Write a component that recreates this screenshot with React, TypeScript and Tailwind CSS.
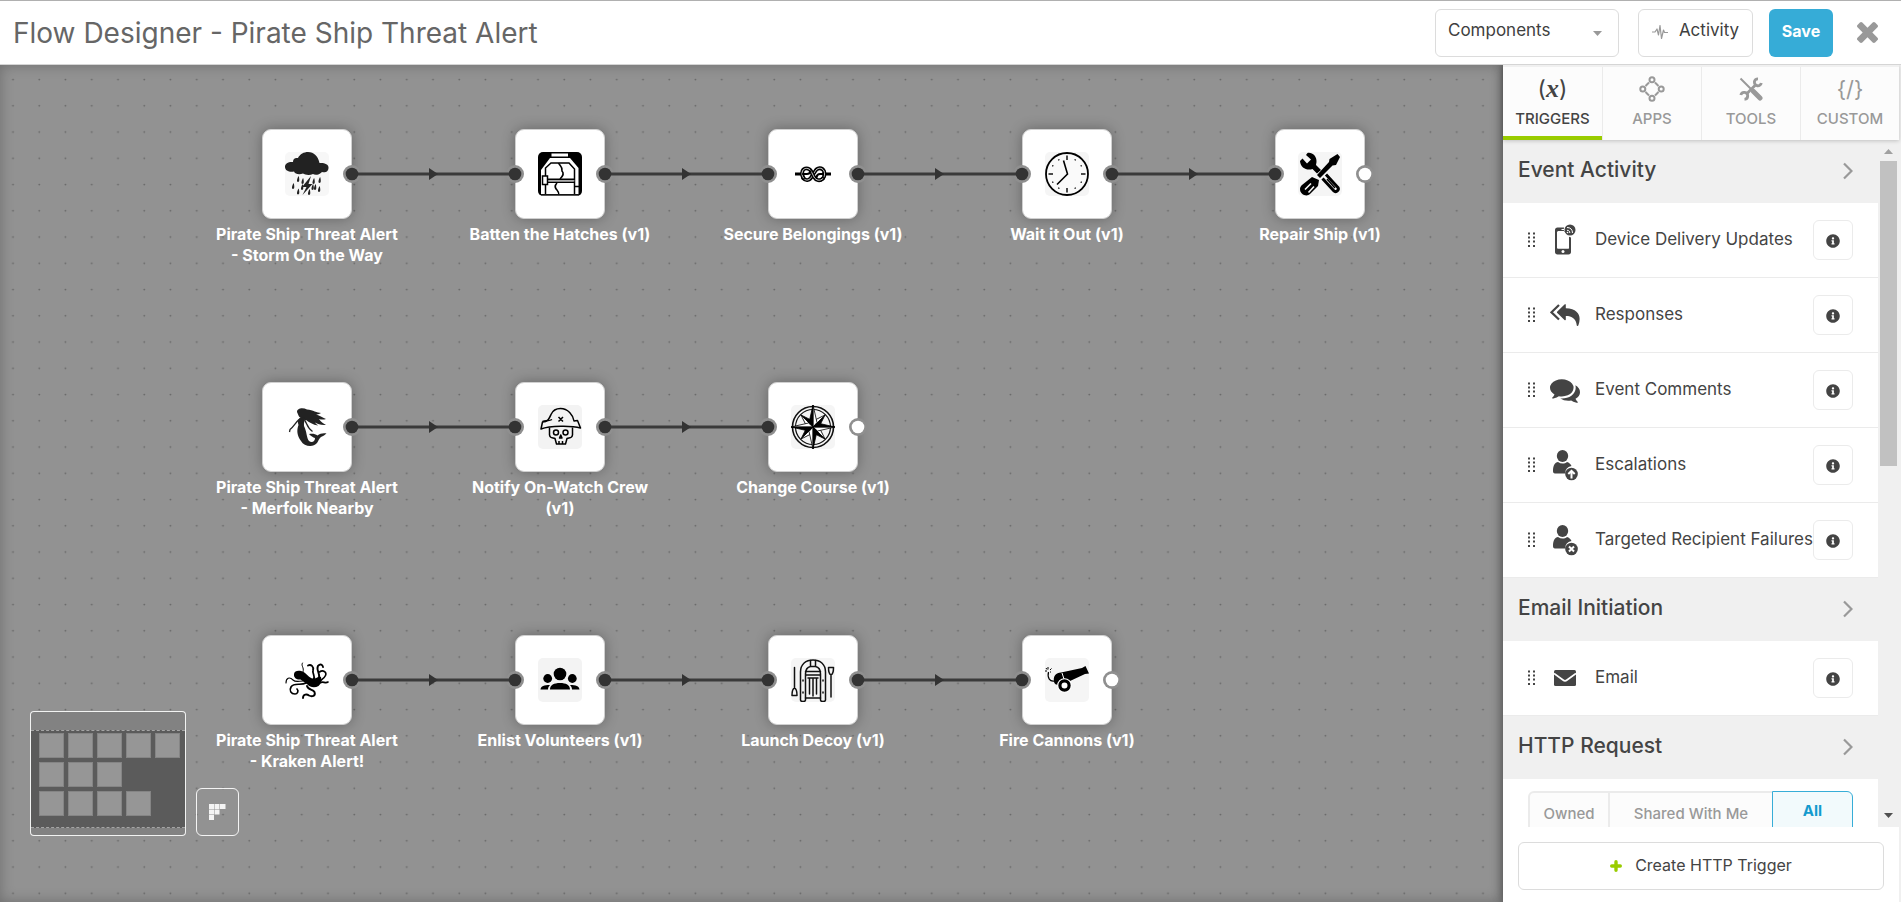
import React from 'react';
import { FaInfoCircle } from 'react-icons/fa';

type IconProps = { children: React.ReactNode; tile?: string };

function Glyph({ children, tile }: IconProps) {
  return (
    <svg viewBox="0 0 44 44" className="size-11" fill="none" aria-hidden="true">
      {tile && <rect width="44" height="44" rx="5" fill={tile} />}
      {children}
    </svg>
  );
}

const drops = [
  [13, 26], [17.5, 28], [8, 33], [13, 38.5], [17, 34], [28.5, 28], [34.5, 27], [27.5, 34], [34, 36], [24, 39], [30, 34],
];

function StormIcon() {
  return (
    <Glyph tile="#f7f7f7">
      <g fill="#222">
        <path d="M0 15C0 11 4 9.500 8 10C8 6.500 10 5.500 13 6C15 2 19 0 23 0C29 0 33 4 34.500 11C39 10.500 43.500 12 43.500 15.500C43.500 20 40 21 37 20C34 23 30 23.500 28 22C25 23.500 20 23 18 21.500C14 23 10 22 9 19.500C5 20.500 0 19 0 15Z" />
        <path d="M26 24L17 35H21.500L17.500 43L27.500 32H23.500Z" />
        {drops.map(([x, y]) => (
          <path key={`${x}-${y}`} d={`M${x + 0.6} ${y - 2}C${x + 1.6} ${y + 1} ${x + 1.6} ${y + 4} ${x} ${y + 4}C${x - 1.6} ${y + 4} ${x - 1.2} ${y + 1} ${x + 0.6} ${y - 2}Z`} />
        ))}
      </g>
    </Glyph>
  );
}

function HatchIcon() {
  return (
    <Glyph>
      <rect width="44" height="44" rx="5" fill="#000" />
      <rect x="13.500" y="1.500" width="16.500" height="3" fill="#fff" />
      <path d="M3 42V18L12 6H32L40.500 16V42Z" fill="#fff" />
      <path d="M7.500 44V16L13 11H31L36.500 17V44M7.500 27.300H36.500M7.500 30.300H36.500M36.500 34.500H42" stroke="#000" strokeWidth="1.500" />
      <path d="M8 28.800H36.500" stroke="#999" strokeWidth="1.200" />
      <path d="M20.500 11C22 14 25 15 24 19C27 22 24 25 22 27M19 31C16 34 17 36 19 38C21 40 21 41 21 44" stroke="#000" strokeWidth="1.600" />
      <rect x="4.500" y="24" width="5" height="8.500" fill="#fff" stroke="#000" strokeWidth="1.500" />
      <path d="M3 43.500H41" stroke="#555" strokeWidth="1.500" />
    </Glyph>
  );
}

function KnotIcon() {
  return (
    <Glyph>
      <path d="M4 22H13M31 22H40" stroke="#000" strokeWidth="2.800" />
      <g strokeLinecap="round">
        <path d="M12 26C15 29.500 19 28.500 21 24L24 19.500C26 15.500 31 15 33 19C34.500 23 33 27 29.500 28" stroke="#000" strokeWidth="3.800" />
        <path d="M12 26C15 29.500 19 28.500 21 24L24 19.500C26 15.500 31 15 33 19C34.500 23 33 27 29.500 28" stroke="#fff" strokeWidth="0.800" />
        <path d="M32 26.500C29 29.500 25 28.500 23 25L20 19C18 15.500 13 15.500 11.500 19C10.500 22 11 24 12.500 26" stroke="#000" strokeWidth="3.800" />
        <path d="M32 26.500C29 29.500 25 28.500 23 25L20 19C18 15.500 13 15.500 11.500 19C10.500 22 11 24 12.500 26" stroke="#fff" strokeWidth="0.800" />
        <path d="M12 22H16C18 22 19 21 19.500 19.500M32 22H29C27 22 26 23 25.500 25" stroke="#000" strokeWidth="2.200" />
      </g>
    </Glyph>
  );
}

const ticks = [0, 30, 60, 90, 120, 150, 180, 210, 240, 270, 300, 330];

function ClockIcon() {
  return (
    <Glyph tile="#f5f5f5">
      <circle cx="22" cy="22" r="21" fill="#fafafa" stroke="#000" strokeWidth="1.800" />
      {ticks.map((a) => (
        <path key={a} d={a % 90 === 0 ? 'M22 3.500V8' : 'M22 5V6.200'} stroke="#000" strokeWidth="1.400" transform={`rotate(${a} 22 22)`} />
      ))}
      <path d="M18.500 8.500L22.500 22L12 32.500" stroke="#000" strokeWidth="1.600" />
    </Glyph>
  );
}

function RepairIcon() {
  return (
    <Glyph tile="#f5f5f5">
      <path d="M9.500 1C14 0 19 4 18.500 10L18 13L23 18L19 21.500L14.500 17C9 19 2.500 16 2 9L4.500 6.500L9 11.500L13 7.500L8 3Z" fill="#000" />
      <path d="M39.500 2L42 5L38 13L34.500 13.500L22 26L19 23L31 10L31.500 7Z" fill="#000" />
      <path d="M14 25L21 28L20 34L12 42C9 45 2 43 2 37C2 35 3 34 4 33Z" fill="#000" />
      <path d="M7 37.500L13 31.500M10.500 40.500L16 34.500" stroke="#f5f5f5" strokeWidth="1.600" />
      <path d="M24.500 26.500L36 39C37.500 40.500 41.500 38.500 40 35.500L28 22.500" stroke="#000" strokeWidth="3" />
      <path d="M29 27L37 36" stroke="#000" strokeWidth="1.500" />
    </Glyph>
  );
}

function MermaidIcon() {
  return (
    <Glyph>
      <g fill="#222">
        <path d="M12 7C12 3 18 2.500 22 4.500C28 5 32 8 36 8C34 9.500 32 9.500 31 9.500C35 10.500 38 13 41 14C38 15 36 14.500 34 14C36 17 38 18.500 41 20C36 20.500 33 19 30 17.500C31 19 32 19.500 33 20.500C28 20 24 17 21 15C19 15.500 14 12.500 13.500 10.500Z" />
        <path d="M14.500 13C12.500 15 12.500 17 13.500 20C11.500 25 12 31 16 36C19 41.500 28 43 32 38C34 35 34 33 37 31.500C39.500 30.500 40 29.500 41.500 28.500C38 28 35 28.500 32.500 30.500C30 28.500 27 28.500 24 29C26 31 28 32.500 30 33C30 37 26.500 38 24 36C21.500 33 22 27 19 21C18.500 18 20 15 19.500 12.500Z" />
      </g>
      <path d="M14 14.500C10 18 9.500 21 5 24.500L4.500 27M19.500 15C22 18 22 23 27.500 26.500" stroke="#222" strokeWidth="1.300" />
    </Glyph>
  );
}

function SkullIcon() {
  return (
    <Glyph tile="#f3f3f3">
      <g stroke="#000" strokeWidth="1.500" strokeLinejoin="round">
        <path d="M3 24L4.500 17C10 17 11.500 13 13 9.500C15 5 18 3.500 22.500 3.500C30 3.500 35 10 36 16L39.500 15.500L42.500 23C34 20.500 12 20.500 3 24Z" />
        <path d="M4.500 16.500C8 15.500 12 16 14 14.500M20.500 12L25 16.500M25 12L20.500 16.500" />
        <path d="M11.500 22.500V30C12 34 15 32.500 17 33.500L18.500 39H27.500L29 33.500C31 32.500 34 34 34.500 30V22.500" />
        <circle cx="18" cy="27.500" r="2.500" />
        <circle cx="27.500" cy="27.500" r="2.500" />
        <path d="M22.800 30L21.500 33H24ZM21 36V39M24.500 36V39" />
      </g>
    </Glyph>
  );
}

function CompassIcon() {
  return (
    <Glyph tile="#f5f5f5">
      <circle cx="22" cy="22" r="20.500" stroke="#111" strokeWidth="1.600" />
      <circle cx="22" cy="22" r="17.500" stroke="#111" strokeWidth="1.200" />
      {[45, 135, 225, 315].map((a) => (
        <g key={a} transform={`rotate(${a} 22 22)`} stroke="#000" strokeWidth="0.800">
          <path d="M22 22L22 5L26 17Z" fill="#000" />
          <path d="M22 22L22 5L18 17Z" fill="#fff" />
        </g>
      ))}
      {[0, 90, 180, 270].map((a) => (
        <g key={a} transform={`rotate(${a} 22 22)`} stroke="#000" strokeWidth="0.800">
          <path d="M22 22L22 0L26 17.500Z" fill="#fff" />
          <path d="M22 22L22 0L18 17.500Z" fill="#000" />
        </g>
      ))}
    </Glyph>
  );
}

function KrakenIcon() {
  return (
    <Glyph>
      <path d="M9 16C9.500 12 15 12 18.500 14C22 16 24 20 28 20.500C32 21 34 17 36 19C37 22 36 26 33.500 28C30 30 25 29.500 22.500 26.500C20 25 18 23 15.500 21.500C12 22 8.500 20 9 16Z" fill="#000" />
      <g stroke="#000" strokeLinecap="round">
        <path d="M17.500 5C15.500 8 19.500 9 18 14" strokeWidth="1" />
        <path d="M23 7.500C26 6 29 8.500 28 12.500C27 16 31 18 28.500 22" strokeWidth="1.800" />
        <path d="M38 9C37.500 5 32 6 32.500 11C33 15 36 18 33 23" strokeWidth="1.900" />
        <path d="M34.500 14C38 11.500 42 14 40.500 17.500C39 21 35 22 34 25M35 25C38 22.500 40 26 43 24" strokeWidth="1.600" />
        <path d="M1 25C1 20 4.500 18.500 8 22C10.500 24.500 14 23 18 23" strokeWidth="1.100" />
        <path d="M12 31C14 33 12.500 36 10 36C6 36 4 32.500 6 29C9 24 16 28 21 25" strokeWidth="1.700" />
        <path d="M18 40C18 36 22 36 24 37.500C27 39 31 38 29.500 34C28 31 23 32 22 28" strokeWidth="1.900" />
      </g>
    </Glyph>
  );
}

function CrowdIcon() {
  return (
    <Glyph tile="#f3f3f3">
      <g fill="#000">
        <circle cx="22" cy="16" r="6.300" />
        <circle cx="9.700" cy="20.500" r="4.400" />
        <circle cx="34.300" cy="20.500" r="4.400" />
        <path d="M12 31.500C12 27 16 25 22 25S32 27 32 31.500ZM2.500 31.500C3 28 6 27 12 27C10.500 28.500 10 30 10 31.500ZM41.500 31.500C41 28 38 27 32 27C33.500 28.500 34 30 34 31.500Z" />
      </g>
    </Glyph>
  );
}

function BoatIcon() {
  return (
    <Glyph tile="#f5f5f5">
      <g stroke="#111" strokeWidth="1.500" strokeLinejoin="round" strokeLinecap="round">
        <path d="M9.500 42V14C9.500 6 15 2 22 2S34.500 6 34.500 14V42C34.500 44 29.500 44 29.500 42V40H14.500V42C14.500 44 9.500 44 9.500 42Z" />
        <path d="M14.500 40V16C14.500 11 17 9 19.500 8.500H24.500C27 9 29.500 11 29.500 16V40M14.500 13.500H29.500M14.500 17H29.500M19.500 8.500V2.500M24.500 8.500V2.500" />
        <path d="M18.500 21V36M22 21V38M25.500 21V36M17 20H27M12 22V23M12 34V35M32 22V23M32 34V35" />
        <path d="M3.500 9.500V30M3.500 30C1 31 1 34 1 37.500H6C6 34 6 31 3.500 30ZM40 39V17M40 17C37.500 16 37.500 13 37.500 9.500H42.500C42.500 13 42.500 16 40 17Z" />
      </g>
    </Glyph>
  );
}

function CannonIcon() {
  return (
    <Glyph tile="#f5f5f5">
      <path d="M9 23C8 18 11 15 16 14.500L37 10L40.500 8L44 15.500L40 16L25 23L15 27C11 27 9 26 9 23Z" fill="#000" />
      <circle cx="19.500" cy="27.500" r="4.600" fill="#fff" stroke="#fff" strokeWidth="5.500" />
      <circle cx="19.500" cy="27.500" r="4.600" fill="#fff" stroke="#000" strokeWidth="3.200" />
      <path d="M17 15L19 21" stroke="#fff" strokeWidth="1" />
      <path d="M9.500 23C5 24 2 20 3.500 14" stroke="#000" strokeWidth="1.200" />
      <path d="M0 13H2M3 9V11.500M5 12L6.500 10.500M1 10L2 11.500M5 14H6" stroke="#000" strokeWidth="1" />
    </Glyph>
  );
}

type FlowNode = { label: string; icon: React.ReactNode };

const flows: FlowNode[][] = [
  [
    { label: 'Pirate Ship Threat Alert - Storm On the Way', icon: <StormIcon /> },
    { label: 'Batten the Hatches (v1)', icon: <HatchIcon /> },
    { label: 'Secure Belongings (v1)', icon: <KnotIcon /> },
    { label: 'Wait it Out (v1)', icon: <ClockIcon /> },
    { label: 'Repair Ship (v1)', icon: <RepairIcon /> },
  ],
  [
    { label: 'Pirate Ship Threat Alert - Merfolk Nearby', icon: <MermaidIcon /> },
    { label: 'Notify On-Watch Crew (v1)', icon: <SkullIcon /> },
    { label: 'Change Course (v1)', icon: <CompassIcon /> },
  ],
  [
    { label: 'Pirate Ship Threat Alert - Kraken Alert!', icon: <KrakenIcon /> },
    { label: 'Enlist Volunteers (v1)', icon: <CrowdIcon /> },
    { label: 'Launch Decoy (v1)', icon: <BoatIcon /> },
    { label: 'Fire Cannons (v1)', icon: <CannonIcon /> },
  ],
];

const columns = [307, 560, 813, 1067, 1320];
const rows = [109, 362, 615];
const half = 45;

function Wires() {
  return (
    <svg className="pointer-events-none absolute inset-0 size-full" aria-hidden="true">
      {flows.map((flow, r) =>
        flow.map((node, c) => {
          const y = rows[r];
          const out = columns[c] + half;
          const last = c === flow.length - 1;
          const next = last ? out : columns[c + 1] - half;
          return (
            <g key={node.label}>
              <circle cx={out} cy={y} r="9" fill="#8f8f8f" />
              {!last && (
                <>
                  <circle cx={next} cy={y} r="9" fill="#8f8f8f" />
                  <path d={`M${out} ${y}H${next}`} stroke="#3a3a3a" strokeWidth="3" />
                  <path d={`M${out + 77} ${y - 6}V${y + 6}L${out + 86} ${y}Z`} fill="#333" />
                  <circle cx={next} cy={y} r="6.300" fill="#333" />
                </>
              )}
              <circle cx={out} cy={y} r="6.300" fill={last ? '#fff' : '#333'} />
            </g>
          );
        }),
      )}
    </svg>
  );
}

function MiniMap() {
  return (
    <div className="absolute bottom-[66px] left-[30px] flex items-end gap-2.5">
      <div className="h-[125px] w-[156px] rounded border border-white/90 bg-[#828282] pt-[18px]">
        <div className="flex h-[98px] flex-col gap-1 border-y border-dashed border-[#a5a5a5] bg-[#5b5b5b] pt-0.5 pl-2">
          {flows.map((flow, i) => (
            <div key={i} className="flex gap-1">
              {flow.map((n) => (
                <span key={n.label} className="size-[25px] border border-[#858585] bg-[#969696]" />
              ))}
            </div>
          ))}
        </div>
      </div>
      <button type="button" aria-label="Arrange steps" className="flex h-12 w-[43px] items-center justify-center rounded-md border border-white/90">
        <svg viewBox="0 0 17 16" className="h-4 w-[17px]" fill="#f4f4f4">
          <path d="M0 0h5v5H0zM5.500 0h5v5h-5zM11 0h5.500v5H11zM0 5.500h5v5H0zM5.500 5.500h5v5h-5zM0 11h5v5H0z" />
        </svg>
      </button>
    </div>
  );
}

function Canvas() {
  return (
    <main className="relative min-w-0 flex-1 overflow-hidden bg-[#929292]">
      <svg className="absolute inset-0 size-full" aria-hidden="true">
        <defs>
          <pattern id="grid" width="26.250" height="26.250" patternUnits="userSpaceOnUse" x="0" y="1.300">
            <circle cx="13" cy="13.200" r="0.900" fill="#666" />
          </pattern>
        </defs>
        <rect width="100%" height="100%" fill="url(#grid)" />
      </svg>
      {flows.map((flow, r) =>
        flow.map((node, c) => (
          <div
            key={node.label}
            className="absolute flex w-[188px] -translate-x-1/2 flex-col items-center gap-[5px]"
            style={{ left: columns[c], top: rows[r] - half }}
          >
            <div className="flex size-[90px] items-center justify-center rounded-[9px] border border-[#d0d0d0] bg-white shadow-[0_0_14px_rgba(0,0,0,0.3)]">
              {node.icon}
            </div>
            <p className="text-center text-base leading-[21px] font-bold text-white">{node.label}</p>
          </div>
        )),
      )}
      <Wires />
      <div className="pointer-events-none absolute inset-0 shadow-[inset_0_0_14px_rgba(0,0,0,0.25)]" />
      <MiniMap />
    </main>
  );
}

function Person({ mark }: { mark: string }) {
  return (
    <svg viewBox="0 0 30 32" className="h-8 w-[30px]" aria-hidden="true">
      <g fill="#444">
        <ellipse cx="12.500" cy="7" rx="5.700" ry="6" />
        <path d="M3 22C3 16 5 13.500 8 13C11 15 14.500 15 17 13C19 13.500 20.500 15 21.500 17C17 18 15 21 15.500 24.500H5C3.500 24.500 3 23.500 3 22Z" />
        <circle cx="21.500" cy="25" r="6.300" />
      </g>
      <path d={mark} stroke="#fff" strokeWidth="2" fill="none" />
    </svg>
  );
}

const deviceIcon = (
  <svg viewBox="0 0 30 32" className="h-8 w-[30px]" aria-hidden="true">
    <path d="M7.500 3.500H14C13.500 6 14 8 15.500 10V7H8V24.500H18.500V12.500L21 13.500V28C21 29.500 20 30.500 18.500 30.500H7.500C6 30.500 5 29.500 5 28V6C5 4.500 6 3.500 7.500 3.500Z" fill="#444" />
    <path d="M7 7.500H15V9H17L19 12V24.500H7Z" fill="#fff" />
    <path d="M11.500 5.500H14" stroke="#fff" strokeWidth="1" />
    <circle cx="13" cy="27.500" r="1.500" fill="#fff" />
    <circle cx="20" cy="6" r="5.500" fill="#444" />
    <path d="M17 3.500C20.500 3.500 22.500 5.500 22.500 9M17 6.300C19 6.300 19.800 7.300 19.800 9" stroke="#fff" strokeWidth="1" fill="none" />
    <circle cx="17.500" cy="8.500" r="0.800" fill="#fff" />
  </svg>
);

const replyAllIcon = (
  <svg viewBox="0 0 30 22" className="h-[22px] w-[30px]" aria-hidden="true">
    <path d="M9 1L1.500 8.300L9 15.500" stroke="#444" strokeWidth="2.200" fill="none" />
    <path d="M15.800 0.500C16 0 15 0 14.500 0.500L7.300 7.500C6.800 8 6.800 8.500 7.300 9L14.500 16C15 16.500 15.800 16.300 15.800 15.800V12C22 12 26 14.500 26.800 21.500C27 22.300 28 22 28.300 21.500C31.500 13 29.500 5 15.800 4.300Z" fill="#444" />
  </svg>
);

const commentsIcon = (
  <svg viewBox="0 0 1792 1792" className="size-[30px]" fill="#444" aria-hidden="true">
    <path d="M1408 768q0 139-94 257t-256.500 186.500-353.500 68.500q-86 0-176-16-124 88-278 128-36 9-86 16h-3q-11 0-20.500-8t-11.500-21q-1-3-1-6.500t.5-6.500 2-6l2.500-5 3.500-5.500 4-5 4.500-5 4-4.500q5-6 23-25t26-29.500 22.500-29 25-38.500 20.500-44q-124-72-195-177t-71-224q0-139 94-257t256.500-186.500 353.500-68.500 353.500 68.500 256.500 186.500 94 257zm384 256q0 120-71 224.500t-195 176.500q10 24 20.500 44t25 38.500 22.500 29 26 29.500 23 25q1 1 4 4.500t4.500 5 4 5 3.500 5.500l2.500 5 2 6 .5 6.500-1 6.500q-3 14-13 22t-22 7q-50-7-86-16-154-40-278-128-90 16-176 16-271 0-472-132 58 4 88 4 161 0 309-45t264-129q125-92 192-212t67-254q0-77-23-152 129 71 204 178t75 230z" />
  </svg>
);

const mailIcon = (
  <svg viewBox="0 0 22 16" className="h-4 w-[22px]" aria-hidden="true">
    <rect width="22" height="16" rx="1.500" fill="#444" />
    <path d="M0 3.500L9 10C10.300 11 11.700 11 13 10L22 3.500" stroke="#fff" strokeWidth="1.700" fill="none" />
  </svg>
);

const gripRows = [0, 4, 8, 12.500];

function TriggerRow({ label, icon }: { label: string; icon: React.ReactNode }) {
  return (
    <li className="flex h-[75px] items-center border-b border-[#ebebeb] bg-white pr-[25px] pl-[25px]">
      <svg viewBox="0 0 7 16" className="h-4 w-[7px] shrink-0 cursor-grab" fill="#444" aria-hidden="true">
        {gripRows.map((y) => (
          <path key={y} d={`M0 ${y + 0.5}h2v2h-2zM5 ${y + 0.5}h2v2h-2z`} />
        ))}
      </svg>
      <span className="ml-[15px] flex w-[30px] shrink-0 justify-center">{icon}</span>
      <span className="ml-[15px] min-w-0 flex-1 pb-px text-[17px] whitespace-nowrap text-[#444]">{label}</span>
      <button type="button" aria-label={`About ${label}`} className="flex size-10 shrink-0 items-center justify-center rounded-md border border-[#ebebeb] bg-white">
        <FaInfoCircle className="mt-0.5 size-3.5 text-[#444]" />
      </button>
    </li>
  );
}

function SectionHeader({ title }: { title: string }) {
  return (
    <h2>
      <button type="button" className="flex h-[63px] w-full items-center justify-between bg-[#f0f0f0] pr-[25px] pb-1 pl-[15px] text-left text-[21px] font-medium text-[#444]">
        {title}
        <svg viewBox="0 0 10 18" className="mt-0.5 h-[18px] w-2.5" fill="none" aria-hidden="true">
          <path d="M1 1.500L8.500 9L1 16.500" stroke="#999" strokeWidth="2.200" />
        </svg>
      </button>
    </h2>
  );
}

const tabs = [
  {
    label: 'TRIGGERS',
    active: true,
    icon: (
      <span className="flex items-center text-[23px] leading-6">
        (<span className="font-['Liberation_Serif',serif] text-[26px] font-bold italic">x</span>)
      </span>
    ),
  },
  {
    label: 'APPS',
    icon: (
      <svg viewBox="0 0 26 26" className="size-[26px]" fill="none" stroke="currentColor" strokeWidth="2" aria-hidden="true">
        <circle cx="13" cy="3.800" r="2.500" />
        <circle cx="3.800" cy="13" r="2.500" />
        <circle cx="22.200" cy="13" r="2.500" />
        <circle cx="13" cy="22.200" r="2.500" />
        <path d="M10 6.500L6.500 10M16 6.500L19.500 10M6.500 16L10 19.500M19.500 16L16 19.500" />
      </svg>
    ),
  },
  {
    label: 'TOOLS',
    icon: (
      <svg viewBox="0 0 24 24" className="size-6" fill="none" stroke="currentColor" aria-hidden="true">
        <path d="M1.500 1.500L13 13" strokeWidth="2" />
        <path d="M14.500 14.500L21 21" strokeWidth="5" strokeLinecap="round" />
        <path d="M8 16.500L16.500 8" strokeWidth="2.800" />
        <path d="M19 1.800A3.500 3.500 0 1 0 22.300 6M1.800 18A3.500 3.500 0 1 1 5.500 22.300" strokeWidth="2.800" />
      </svg>
    ),
  },
  { label: 'CUSTOM', icon: <span className="text-[22px] leading-6">{'{/}'}</span> },
];

function Sidebar() {
  return (
    <aside className="z-10 flex w-[398px] shrink-0 flex-col border-r-2 border-[#f0f0f0] bg-white shadow-[0_0_10px_rgba(0,0,0,0.4)]">
      <nav className="z-10 grid h-[75px] shrink-0 grid-cols-4 border-t-2 border-[#f0f0f0] bg-[#fcfcfc] shadow-[0_1px_4px_rgba(0,0,0,0.2)]">
        {tabs.map((tab) => (
          <button
            key={tab.label}
            type="button"
            className={
              tab.active
                ? 'flex flex-col items-center border-b-4 border-[#99cc00] pt-[9px] text-[#444]'
                : 'flex flex-col items-center border-l border-[#ebebeb] pt-[9px] text-[#999]'
            }
          >
            <span className="flex h-[26px] items-center">{tab.icon}</span>
            <span className="mt-[7px] text-[15px] leading-5 font-medium">{tab.label}</span>
          </button>
        ))}
      </nav>
      <div className="flex min-h-0 flex-1">
        <div className="min-w-0 flex-1 overflow-hidden">
          <SectionHeader title="Event Activity" />
          <ul>
            <TriggerRow label="Device Delivery Updates" icon={deviceIcon} />
            <TriggerRow label="Responses" icon={replyAllIcon} />
            <TriggerRow label="Event Comments" icon={commentsIcon} />
            <TriggerRow label="Escalations" icon={<Person mark="M21.500 29.500V22M18.300 25L21.500 21.800L24.700 25" />} />
            <TriggerRow label="Targeted Recipient Failures" icon={<Person mark="M19 22.500L24 27.500M24 22.500L19 27.500" />} />
          </ul>
          <SectionHeader title="Email Initiation" />
          <ul>
            <TriggerRow label="Email" icon={mailIcon} />
          </ul>
          <SectionHeader title="HTTP Request" />
          <div className="flex px-[25px] pt-3">
            <button type="button" className="h-12 w-[81px] rounded-l-md border-2 border-r border-[#ebebeb] bg-[#fcfcfc] pb-0.5 text-[15px] font-medium text-[#999]">Owned</button>
            <button type="button" className="h-12 flex-1 border-y-2 border-l border-[#ebebeb] bg-[#fcfcfc] pb-0.5 text-[15px] font-medium text-[#999]">Shared With Me</button>
            <button type="button" className="h-[42px] w-[81px] rounded-r-md border border-[#37add7] bg-[#f2fafc] pb-0.5 text-[15px] font-bold text-[#149bce]">All</button>
          </div>
        </div>
        <div className="flex w-[21px] shrink-0 flex-col items-center bg-[#f0f0f0] py-[9px]" aria-hidden="true">
          <svg viewBox="0 0 9 5" className="h-[5px] w-[9px] shrink-0" fill="#a0a0a0"><path d="M4.500 0L9 5H0Z" /></svg>
          <div className="mt-[7px] h-[305px] w-[17px] bg-[#c1c1c1]" />
          <svg viewBox="0 0 9 5" className="mt-auto h-[5px] w-[9px] shrink-0" fill="#505050"><path d="M4.500 5L9 0H0Z" /></svg>
        </div>
      </div>
      <div className="h-[75px] shrink-0 bg-white px-[15px] pt-[15px]">
        <button type="button" className="flex h-12 w-full items-center justify-center gap-[13px] rounded-md border border-[#dcdcdc] bg-white pb-[3px] text-base text-[#444]">
          <svg viewBox="0 0 12 12" className="mt-0.5 size-3" stroke="#99cc00" strokeWidth="3.400" strokeLinecap="round" aria-hidden="true">
            <path d="M6 1.700V10.300M1.700 6H10.300" />
          </svg>
          Create HTTP Trigger
        </button>
      </div>
    </aside>
  );
}

function Header() {
  return (
    <header className="relative z-20 flex h-[65px] shrink-0 items-center border-y border-t-[#b0b0b0] border-b-[#d5d5d5] bg-white pr-[23px] pl-[13px] text-[#404040]">
      <h1 className="flex-1 text-[28px] text-[#666]">Flow Designer - Pirate Ship Threat Alert</h1>
      <div className="relative">
        <select aria-label="Components" className="h-12 w-[184px] appearance-none rounded-md border border-[#dcdcdc] bg-white pr-8 pb-[3px] pl-3 text-[17px]">
          <option>Components</option>
        </select>
        <svg viewBox="0 0 9 5" className="pointer-events-none absolute top-[22px] right-[17px] h-[5px] w-[9px]" fill="#999" aria-hidden="true"><path d="M4.500 5L9 0H0Z" /></svg>
      </div>
      <button type="button" className="ml-[19px] flex h-12 w-[115px] items-center justify-center gap-[11px] rounded-md border border-[#dcdcdc] bg-white pb-[3px] text-[17px]">
        <svg viewBox="0 0 16 14" className="mt-0.5 h-3.5 w-4" fill="none" stroke="#999" strokeWidth="1.200" strokeLinejoin="round" aria-hidden="true">
          <path d="M0 7H3L5 4L6.500 10L8 0.500L9.500 13.500L11.500 5L12.500 7.500H16" />
        </svg>
        Activity
      </button>
      <button type="button" className="ml-4 h-12 w-16 rounded-md bg-[#36acd7] pb-[3px] text-base font-bold text-white">Save</button>
      <button type="button" aria-label="Close" className="ml-6 flex size-[21px] items-center justify-center">
        <svg viewBox="302 366 1188 1188" className="size-[21px]" fill="#999">
          <path d="M1490 1322q0 40-28 68l-136 136q-28 28-68 28t-68-28l-294-294-294 294q-28 28-68 28t-68-28l-136-136q-28-28-28-68t28-68l294-294-294-294q-28-28-28-68t28-68l136-136q28-28 68-28t68 28l294 294 294-294q28-28 68-28t68 28l136 136q28 28 28 68t-28 68l-294 294 294 294q28 28 28 68z" />
        </svg>
      </button>
    </header>
  );
}

export default function App() {
  return (
    <div className="flex h-screen flex-col overflow-hidden bg-white font-['Inter','Liberation_Sans',sans-serif]">
      <Header />
      <div className="flex min-h-0 flex-1">
        <Canvas />
        <Sidebar />
      </div>
    </div>
  );
}
